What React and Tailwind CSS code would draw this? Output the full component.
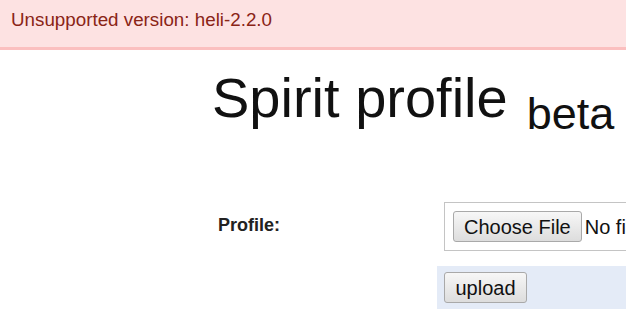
export default function App() {
  return (
    <div className="w-[626px] h-[325px] overflow-hidden bg-white" style={{ fontFamily: '"Liberation Sans", Arial, sans-serif' }}>
      <div className="h-[50px] bg-[#fde2e2] border-b-[3px] border-[#fbbfbf] pl-[11px] pt-[9px] box-border">
        <span className="text-[18.8px] leading-[21px] text-[#8a2416]">Unsupported version: heli-2.2.0</span>
      </div>
      <div className="mt-[20px] pl-[212px] flex items-start whitespace-nowrap text-[#111]">
        <span className="text-[56px] leading-[56px]">Spirit profile</span>
        <span className="text-[45px] leading-[45px] mt-[21px] ml-[19px]">beta</span>
      </div>
      <div className="mt-[59px] flex flex-col gap-[8px]">
        <div className="flex">
          <div className="w-[437px] shrink-0 pl-[218px] pt-[21px] text-[18px] leading-[18px] font-bold text-[#222]">Profile:</div>
          <div className="p-[7px] shrink-0">
            <div className="border border-[#c4c4c4] p-[8px] flex items-center whitespace-nowrap w-[400px]">
              <button className="h-[31px] px-[10px] border border-[#a9a9a9] rounded-[3px] bg-gradient-to-b from-[#f7f7f7] to-[#dddddd] text-[20px] leading-[20px] text-[#111]">Choose File</button>
              <span className="ml-[3px] text-[20px] leading-[20px] text-[#111]">No file chosen</span>
            </div>
          </div>
        </div>
        <div className="flex">
          <div className="w-[437px] shrink-0"></div>
          <div className="flex-1 bg-[#e4ebf7] px-[7px] py-[6px]">
            <button className="h-[31px] px-[10.5px] border border-[#a9a9a9] rounded-[3px] bg-gradient-to-b from-[#f7f7f7] to-[#dddddd] text-[20px] leading-[20px] text-[#111]">upload</button>
          </div>
        </div>
      </div>
    </div>
  );
}
